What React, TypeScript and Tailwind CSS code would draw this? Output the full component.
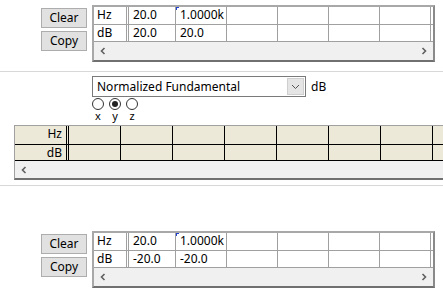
import React from "react";

const F = { fontFamily: '"Segoe UI", "Noto Sans", "Open Sans", sans-serif' };

function ChevL() {
  return (
    <svg width="8" height="8" viewBox="0 0 8 8">
      <path d="M5.5 1 L2.5 4 L5.5 7" stroke="#606060" strokeWidth="1.6" fill="none" />
    </svg>
  );
}
function ChevR() {
  return (
    <svg width="8" height="8" viewBox="0 0 8 8">
      <path d="M2.5 1 L5.5 4 L2.5 7" stroke="#606060" strokeWidth="1.6" fill="none" />
    </svg>
  );
}

function Btn({ label }: { label: string }) {
  return (
    <div className="w-[46px] h-[20px] bg-[#e1e1e1] border border-[#adadad] flex items-center justify-center text-[12px] text-black">
      {label}
    </div>
  );
}

function TopTable({ r1, r2 }: { r1: string[]; r2: string[] }) {
  const widths = [47, 51, 51, 51, 51, 51];
  const row = (head: string, vals: string[], h: string, marker: boolean) => (
    <div className={`flex ${h} border-b border-[#a0a0a0]`}>
      <div className="w-[35px] border-r-[3px] border-double border-[#a0a0a0] pl-[3px] leading-[16px] text-[12px]">{head}</div>
      {widths.map((w, i) => (
        <div
          key={i}
          className="relative border-r border-[#a0a0a0] pl-[4px] leading-[16px] text-[12px]"
          style={{ width: w }}
        >
          {marker && i === 1 && (
            <div className="absolute left-0 top-0 w-[3px] h-[3px] border-l border-t border-[#2040d0]" />
          )}
          {vals[i] ?? ""}
        </div>
      ))}
    </div>
  );
  return (
    <div className="w-[343px] h-[57px] border-2 border-[#a8a8a8] border-b-[#707070] border-r-[#8a8a8a] bg-white flex flex-col">
      {row("Hz", r1, "h-[18px]", true)}
      {row("dB", r2, "h-[17px]", false)}
      <div className="flex-1 bg-[#f0f0f0] flex items-center justify-between px-[5px]">
        <ChevL />
        <ChevR />
      </div>
    </div>
  );
}

function Block({ r1, r2 }: { r1: string[]; r2: string[] }) {
  return (
    <div className="flex pl-[41px] gap-[5px]">
      <div className="flex flex-col gap-[3px] pt-[3px]">
        <Btn label="Clear" />
        <Btn label="Copy" />
      </div>
      <TopTable r1={r1} r2={r2} />
    </div>
  );
}

function Radio({ checked, label }: { checked: boolean; label: string }) {
  return (
    <div className="flex flex-col items-center w-[12px]">
      <div className="w-[12px] h-[12px] rounded-full border border-[#333] bg-white flex items-center justify-center">
        {checked && <div className="w-[6px] h-[6px] rounded-full bg-[#222]" />}
      </div>
      <div className="text-[11px] leading-[12px] mt-[0px]">{label}</div>
    </div>
  );
}

export default function App() {
  const cols = [52, 52, 52, 52, 52, 52, 52, 52];
  const gridRow = (head: string, h: string) => (
    <div className={`flex ${h} border-b border-black`}>
      <div className="w-[54px] shrink-0 border-r-[3px] border-double border-black text-right pr-[4px] text-[12px] leading-[16px]">
        {head}
      </div>
      {cols.map((w, i) => (
        <div key={i} className="shrink-0 border-r border-black" style={{ width: w }} />
      ))}
    </div>
  );
  return (
    <div style={F} className="w-[443px] h-[294px] bg-white overflow-hidden text-black">
      <div className="pt-[5px] h-[71px]">
        <Block r1={["20.0", "1.0000k"]} r2={["20.0", "20.0"]} />
      </div>
      <div className="h-[1px] bg-[#d8d8d8]" />
      <div className="pl-[92px] pt-[4px] flex items-center gap-[5px]">
        <div className="w-[214px] h-[21px] border border-[#7a7a7a] bg-white flex items-center">
          <div className="flex-1 pl-[4px] text-[12px] leading-[16px]">Normalized Fundamental</div>
          <div className="w-[17px] h-[17px] mr-[1px] bg-[#e5e5e5] border border-[#cfcfcf] flex items-center justify-center">
            <svg width="9" height="6" viewBox="0 0 9 6">
              <path d="M1 1 L4.5 4.5 L8 1" stroke="#555" strokeWidth="1" fill="none" />
            </svg>
          </div>
        </div>
        <div className="text-[12px]">dB</div>
      </div>
      <div className="pl-[92px] pt-[1px] flex gap-[5px] h-[28px]">
        <Radio checked={false} label="x" />
        <Radio checked={true} label="y" />
        <Radio checked={false} label="z" />
      </div>
      <div className="ml-[14px] w-[460px] h-[55px] border-l border-t border-[#a0a0a0] border-b-2 border-b-[#707070] flex flex-col overflow-hidden">
        <div className="bg-[#ece9d8]">
          {gridRow("Hz", "h-[19px]")}
          {gridRow("dB", "h-[16px]")}
        </div>
        <div className="flex-1 bg-[#f0f0f0] flex items-center px-[5px]">
          <ChevL />
        </div>
      </div>
      <div className="mt-[5px] h-[1px] bg-[#d8d8d8]" />
      <div className="pt-[45px]">
        <Block r1={["20.0", "1.0000k"]} r2={["-20.0", "-20.0"]} />
      </div>
    </div>
  );
}
